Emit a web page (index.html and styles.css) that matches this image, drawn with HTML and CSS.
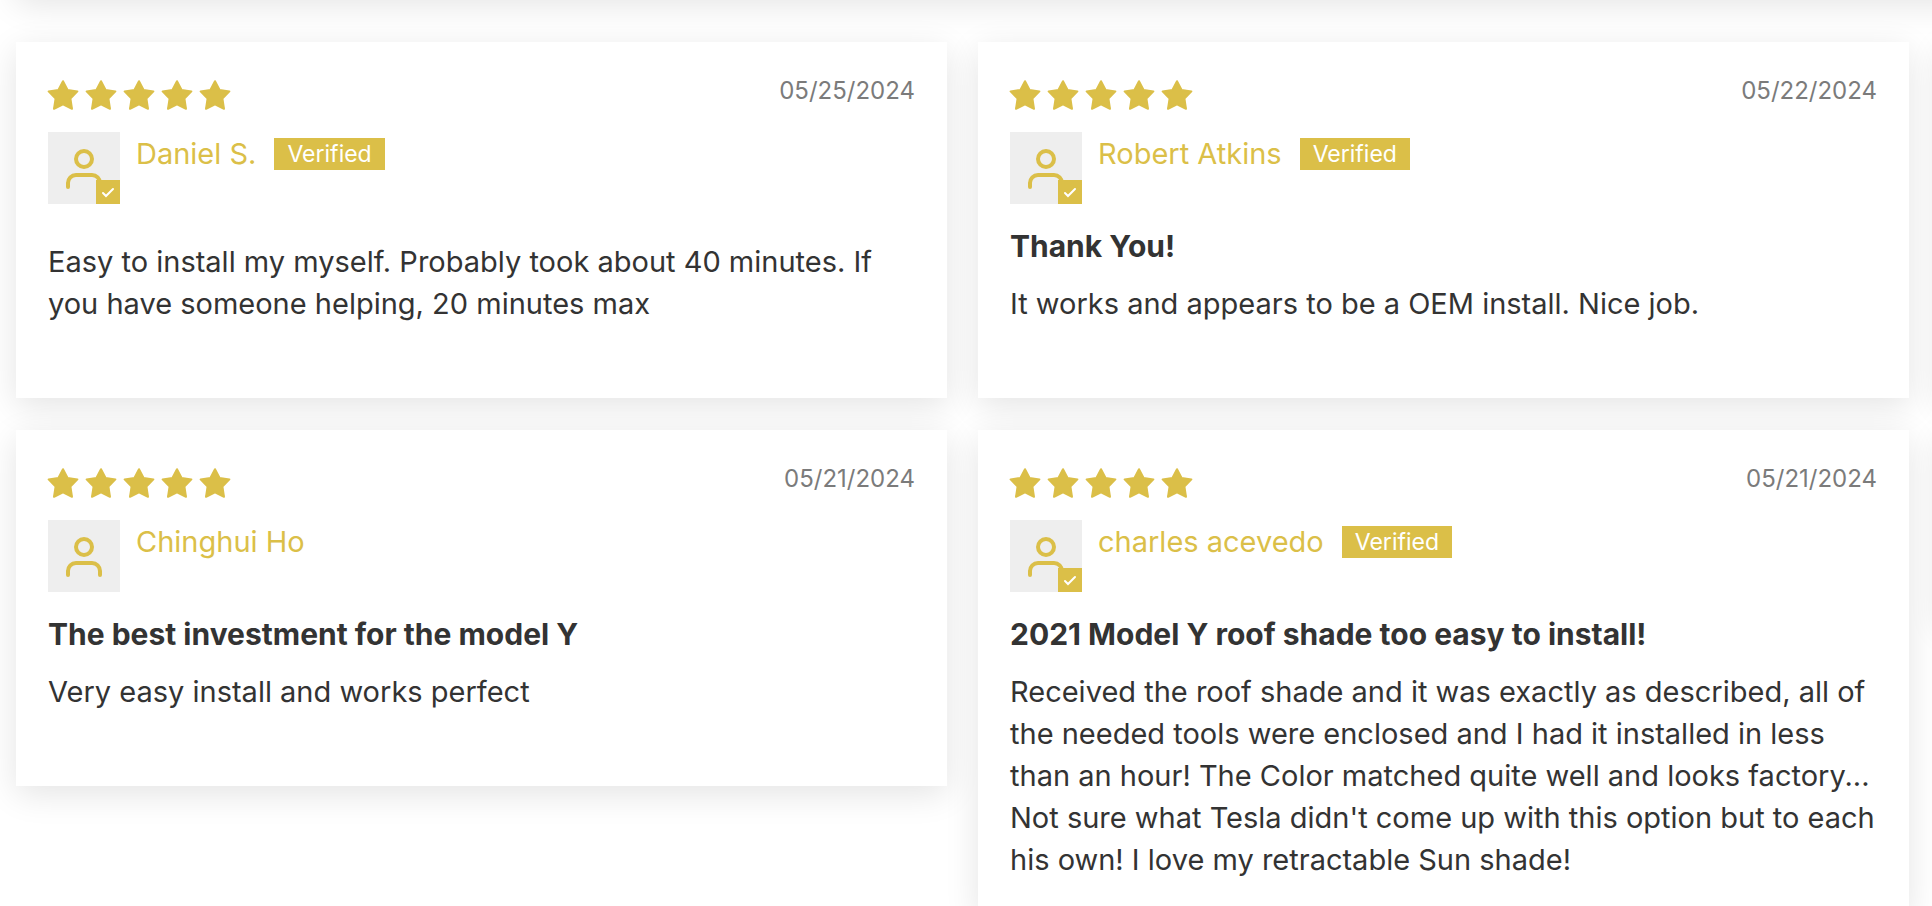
FILE: index.html
```html
<!DOCTYPE html>
<html lang="en">
<head>
  <meta charset="UTF-8">
  <meta name="viewport" content="width=device-width, initial-scale=1.0">
  <title>Customer Reviews</title>
  <link rel="stylesheet" href="styles.css">
</head>
<body>
  <!-- shared icons -->
  <svg class="sprite" aria-hidden="true">
    <symbol id="star" viewBox="0 0 32 32">
      <path d="M16 2.2L20.6 11L30.4 12.4L23.4 19.5L25 29.8L16 25.4L7 29.8L8.6 19.5L1.6 12.4L11.4 11Z" fill="currentColor" stroke="currentColor" stroke-width="2" stroke-linejoin="round"/>
    </symbol>
    <symbol id="person" viewBox="0 0 72 72">
      <circle cx="36" cy="27" r="8" fill="none" stroke="currentColor" stroke-width="4"/>
      <path d="M20 55V51A8 8 0 0 1 28 43H44A8 8 0 0 1 52 51V55" fill="none" stroke="currentColor" stroke-width="4" stroke-linecap="round"/>
    </symbol>
    <symbol id="check" viewBox="0 0 24 24">
      <path d="M7 13L10 16L17 9" fill="none" stroke="currentColor" stroke-width="2" stroke-linecap="round"/>
    </symbol>
  </svg>

  <div class="summary"></div>

  <main class="reviews">
    <div class="column">
      <article class="review">
        <div class="review-top">
          <div class="stars" role="img" aria-label="5 stars">
            <svg><use href="#star"/></svg><svg><use href="#star"/></svg><svg><use href="#star"/></svg><svg><use href="#star"/></svg><svg><use href="#star"/></svg>
          </div>
          <time class="date" datetime="2024-05-25">05/25/2024</time>
        </div>
        <div class="profile">
          <div class="avatar">
            <svg class="person"><use href="#person"/></svg>
            <svg class="check"><use href="#check"/></svg>
          </div>
          <span class="author">Daniel S.</span>
          <span class="verified">Verified</span>
        </div>
        <p class="text untitled">Easy to install my myself. Probably took about 40 minutes. If you have someone helping, 20 minutes max</p>
      </article>

      <article class="review">
        <div class="review-top">
          <div class="stars" role="img" aria-label="5 stars">
            <svg><use href="#star"/></svg><svg><use href="#star"/></svg><svg><use href="#star"/></svg><svg><use href="#star"/></svg><svg><use href="#star"/></svg>
          </div>
          <time class="date" datetime="2024-05-21">05/21/2024</time>
        </div>
        <div class="profile">
          <div class="avatar">
            <svg class="person"><use href="#person"/></svg>
          </div>
          <span class="author">Chinghui Ho</span>
        </div>
        <h3 class="title">The best investment for the model Y</h3>
        <p class="text">Very easy install and works perfect</p>
      </article>
    </div>

    <div class="column">
      <article class="review">
        <div class="review-top">
          <div class="stars" role="img" aria-label="5 stars">
            <svg><use href="#star"/></svg><svg><use href="#star"/></svg><svg><use href="#star"/></svg><svg><use href="#star"/></svg><svg><use href="#star"/></svg>
          </div>
          <time class="date" datetime="2024-05-22">05/22/2024</time>
        </div>
        <div class="profile">
          <div class="avatar">
            <svg class="person"><use href="#person"/></svg>
            <svg class="check"><use href="#check"/></svg>
          </div>
          <span class="author">Robert Atkins</span>
          <span class="verified">Verified</span>
        </div>
        <h3 class="title">Thank You!</h3>
        <p class="text">It works and appears to be a OEM install. Nice job.</p>
      </article>

      <article class="review">
        <div class="review-top">
          <div class="stars" role="img" aria-label="5 stars">
            <svg><use href="#star"/></svg><svg><use href="#star"/></svg><svg><use href="#star"/></svg><svg><use href="#star"/></svg><svg><use href="#star"/></svg>
          </div>
          <time class="date" datetime="2024-05-21">05/21/2024</time>
        </div>
        <div class="profile">
          <div class="avatar">
            <svg class="person"><use href="#person"/></svg>
            <svg class="check"><use href="#check"/></svg>
          </div>
          <span class="author">charles acevedo</span>
          <span class="verified">Verified</span>
        </div>
        <h3 class="title">2021 Model Y roof shade too easy to install!</h3>
        <p class="text">Received the roof shade and it was exactly as described, all of the needed tools were enclosed and I had it installed in less than an hour! The Color matched quite well and looks factory... Not sure what Tesla didn't come up with this option but to each his own! I love my retractable Sun shade!</p>
      </article>
    </div>

    <!-- next column, starts past the right edge -->
    <div class="column">
      <div class="next-card"></div>
      <div class="next-card short"></div>
    </div>
  </main>
</body>
</html>
```

FILE: styles.css
```css
* {
  box-sizing: border-box;
}
body {
  margin: 0;
  background: #fff;
  color: #333;
  font-family: Inter, "Liberation Sans", sans-serif;
  font-size: 29px;
  line-height: 42px;
  overflow-x: hidden;
}
.sprite {
  display: none;
}
/* bottom edge of the block above the reviews */
.summary {
  height: 100px;
  margin: -104px -48px 4px 16px;
  box-shadow: 0 8px 32px rgba(0, 0, 0, 0.11);
}
.reviews {
  display: grid;
  grid-template-columns: 1fr 1fr 40px;
  align-items: start;
  gap: 31px;
  margin-right: -48px;
  padding: 42px 0 42px 16px;
}
.column {
  display: flex;
  flex-direction: column;
  gap: 32px;
}
.review {
  min-height: 356px;
  padding: 32px;
  background: #fff;
  box-shadow: 0 8px 32px rgba(0, 0, 0, 0.11);
}
.next-card {
  height: 356px;
  box-shadow: 0 8px 32px rgba(0, 0, 0, 0.11);
}
.next-card.short {
  height: 192px;
}
.review-top {
  display: flex;
  justify-content: space-between;
  height: 58px;
}
.stars {
  display: flex;
  gap: 6px;
  margin: 5px 0 0 -1px;
}
.stars svg {
  width: 32px;
  height: 32px;
  color: #dbbf48;
}
.date {
  color: #7b7b7b;
  font-size: 24px;
  line-height: 34px;
}
.profile {
  display: flex;
  align-items: flex-start;
}
.avatar {
  position: relative;
  width: 72px;
  height: 72px;
  margin-right: 16px;
  background: #eee;
}
.person {
  display: block;
  width: 72px;
  height: 72px;
  color: #dbbf48;
}
.check {
  position: absolute;
  right: 0;
  bottom: 0;
  width: 24px;
  height: 24px;
  background: #dbbf48;
  color: #fff;
}
.author {
  color: #dbbf48;
  line-height: 44px;
}
.verified {
  margin: 6px 0 0 18px;
  padding: 0 13px;
  background: #dbbf48;
  color: #fff;
  font-size: 23px;
  line-height: 32px;
}
.title {
  margin: 21px 0 0;
  font-size: 30px;
  font-weight: 700;
}
.text {
  margin: 16px 0 0;
}
.untitled {
  margin-top: 37px;
}
```
